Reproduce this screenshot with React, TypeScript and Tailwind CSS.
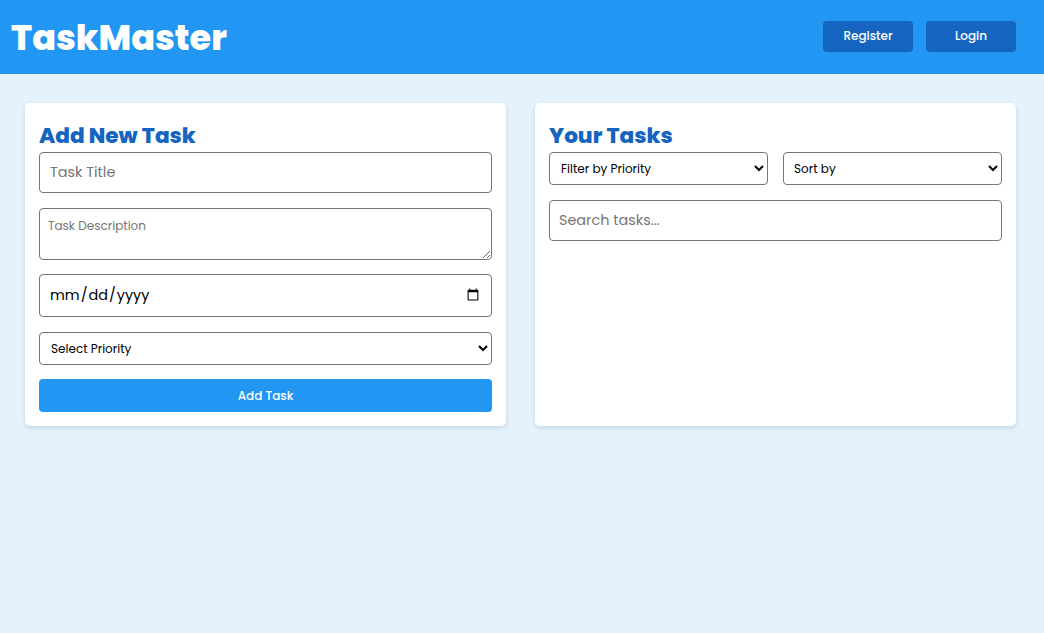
export default function App() {
    return (
        <div className="min-h-[633px] bg-[#e3f2fd] font-['Poppins','DejaVu_Sans',sans-serif]">
            <header className="flex h-[74px] items-center justify-between bg-[#2196f3] pl-[11px] pr-[28px]">
                <h1 className="text-[35px] font-extrabold leading-none text-white">TaskMaster</h1>
                <nav className="flex gap-[13px] pb-[2px]">
                    <button className="h-[31px] w-[90px] rounded-[4px] bg-[#1565c0] text-[12px] font-medium text-white">
                        Register
                    </button>
                    <button className="h-[31px] w-[90px] rounded-[4px] bg-[#1565c0] text-[12px] font-medium text-white">
                        Login
                    </button>
                </nav>
            </header>

            <main className="flex items-stretch gap-[29px] pl-[25px] pr-[28px] pt-[29px]">
                <section className="flex w-[481px] flex-col rounded-[5px] bg-white px-[14px] pb-[14px] pt-[15px] shadow-[0_2px_5px_rgba(0,0,0,0.12)]">
                    <h2 className="h-[34px] text-[21.6px] font-extrabold leading-[35px] text-[#1565c0]">Add New Task</h2>
                    <input
                        type="text"
                        placeholder="Task Title"
                        className="h-[41px] w-full rounded-[4px] border border-[#767676] px-[10px] text-[14.4px] text-black placeholder:text-[#757575] focus:outline-none"
                    />
                    <textarea
                        placeholder="Task Description"
                        className="mt-[15px] h-[52px] w-full rounded-[4px] border border-[#767676] px-[8px] py-[8px] text-[12px] placeholder:text-[#757575] focus:outline-none"
                    />
                    <input
                        type="date"
                        className="mt-[14px] h-[43px] w-full rounded-[4px] border border-[#767676] px-[9px] text-[14.4px] text-black focus:outline-none"
                    />
                    <select className="mt-[15px] h-[33px] w-full rounded-[4px] border border-[#767676] px-[7px] text-[12px] text-black focus:outline-none">
                        <option>Select Priority</option>
                        <option>High</option>
                        <option>Medium</option>
                        <option>Low</option>
                    </select>
                    <button className="mt-[14px] h-[33px] w-full rounded-[4px] bg-[#2196f3] text-[12px] font-medium text-white">
                        Add Task
                    </button>
                </section>

                <section className="flex w-[481px] flex-col rounded-[5px] bg-white px-[14px] pb-[14px] pt-[15px] shadow-[0_2px_5px_rgba(0,0,0,0.12)]">
                    <h2 className="h-[34px] text-[21.6px] font-extrabold leading-[35px] text-[#1565c0]">Your Tasks</h2>
                    <div className="grid grid-cols-2 gap-[15px]">
                        <select className="h-[33px] w-full rounded-[4px] border border-[#767676] px-[7px] text-[12px] text-black focus:outline-none">
                            <option>Filter by Priority</option>
                            <option>High</option>
                            <option>Medium</option>
                            <option>Low</option>
                        </select>
                        <select className="h-[33px] w-full rounded-[4px] border border-[#767676] px-[6px] text-[12px] text-black focus:outline-none">
                            <option>Sort by</option>
                            <option>Due Date</option>
                            <option>Priority</option>
                        </select>
                    </div>
                    <input
                        type="text"
                        placeholder="Search tasks..."
                        className="mt-[15px] h-[41px] w-full rounded-[4px] border border-[#767676] px-[9px] text-[14.4px] placeholder:text-[#757575] focus:outline-none"
                    />
                </section>
            </main>
        </div>
    );
}
